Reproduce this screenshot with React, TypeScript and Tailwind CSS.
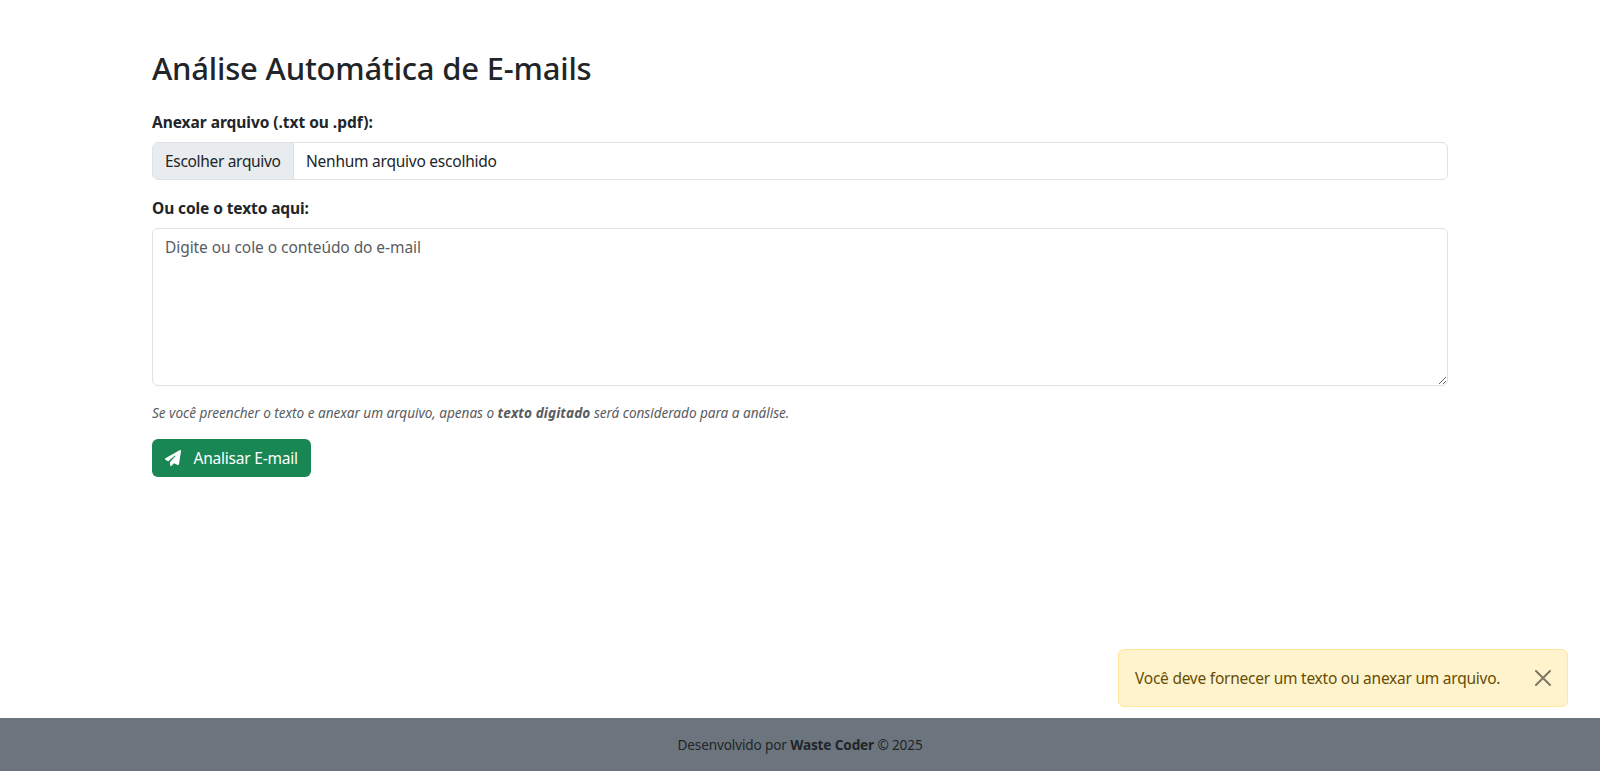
import React from "react";
import { FaPaperPlane } from "react-icons/fa6";

export default function App() {
  return (
    <div className="flex h-[771px] flex-col bg-white font-['Noto_Sans',sans-serif] text-[15.5px] leading-6 text-[#212529]">
      <main className="mx-auto w-[1296px] grow pt-[49px]">
        <h1 className="mb-[23px] text-[31px] leading-[38.4px] font-medium tracking-[-0.2px]">
          Análise Automática de E-mails
        </h1>
        <label className="mb-2 block font-bold tracking-[-0.04px]">Anexar arquivo (.txt ou .pdf):</label>
        <div className="mb-4 flex h-[38px] items-center overflow-hidden rounded-md border border-[#dee2e6]">
          <span className="flex h-full w-[141px] items-center border-r border-[#dee2e6] bg-[#e9ecef] pl-3 tracking-[-0.32px]">
            Escolher arquivo
          </span>
          <span className="pl-3 tracking-[-0.24px]">Nenhum arquivo escolhido</span>
        </div>
        <label className="mb-2 block font-bold tracking-[-0.1px]">Ou cole o texto aqui:</label>
        <textarea
          className="block h-[158px] w-full resize-y rounded-md border border-[#dee2e6] px-3 py-1.5 tracking-[-0.07px] placeholder:text-[#595c5f]"
          placeholder="Digite ou cole o conteúdo do e-mail"
        />
        <p className="mt-4 mb-4 text-[13.6px] leading-[21px] tracking-[-0.035px] text-[#595c5f] italic">
          Se você preencher o texto e anexar um arquivo, apenas o <b className="tracking-[0.1px]">texto digitado</b> será
          considerado para a análise.
        </p>
        <button className="flex h-[38px] w-[159px] items-center rounded-md bg-[#198754] pl-[13px] tracking-[-0.22px] text-white">
          <FaPaperPlane className="mr-[12.5px] size-4" />
          <span>Analisar E-mail</span>
        </button>
      </main>
      <div
        role="alert"
        className="absolute right-8 bottom-16 flex h-[58px] w-[450px] items-center justify-between rounded-md border border-[#ffe69c] bg-[#fff3cd] px-4 tracking-[-0.24px] text-[#664d03]"
      >
        <span>Você deve fornecer um texto ou anexar um arquivo.</span>
        <button aria-label="Fechar" className="opacity-50">
          <svg viewBox="0 0 16 16" className="size-4 fill-black">
            <path d="M.293.293a1 1 0 0 1 1.414 0L8 6.586 14.293.293a1 1 0 1 1 1.414 1.414L9.414 8l6.293 6.293a1 1 0 0 1-1.414 1.414L8 9.414l-6.293 6.293a1 1 0 0 1-1.414-1.414L6.586 8 .293 1.707a1 1 0 0 1 0-1.414z" />
          </svg>
        </button>
      </div>
      <footer className="flex h-[53px] items-center justify-center bg-[#6c757d] text-[13.6px] tracking-[-0.14px]">
        <span>
          Desenvolvido por <b>Waste Coder</b> © 2025
        </span>
      </footer>
    </div>
  );
}
